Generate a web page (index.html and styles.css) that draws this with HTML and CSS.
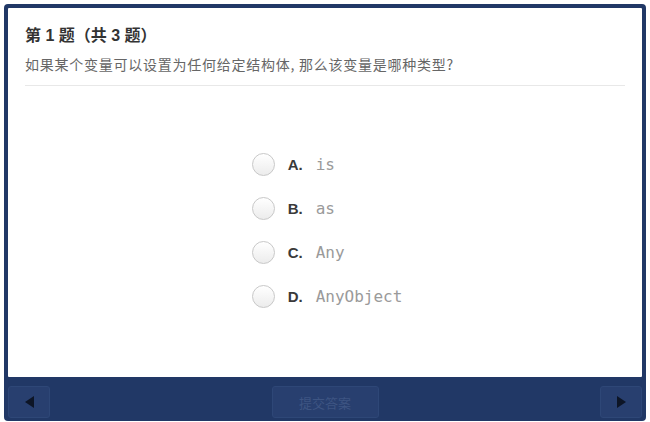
FILE: index.html
```html
<!DOCTYPE html>
<html lang="zh">
<head>
<meta charset="utf-8">
<link rel="stylesheet" href="styles.css">
</head>
<body>
<div class="frame">
  <div class="panel">
    <div class="head">
      <h1 class="title">第 1 题（共 3 题）</h1>
      <p class="question">如果某个变量可以设置为任何给定结构体, 那么该变量是哪种类型?</p>
    </div>
    <div class="body">
      <ul class="options">
        <li class="option"><span class="radio"></span><span class="key">A.</span><span class="val">is</span></li>
        <li class="option"><span class="radio"></span><span class="key">B.</span><span class="val">as</span></li>
        <li class="option"><span class="radio"></span><span class="key">C.</span><span class="val">Any</span></li>
        <li class="option"><span class="radio"></span><span class="key">D.</span><span class="val">AnyObject</span></li>
      </ul>
    </div>
  </div>
  <div class="footer">
    <button class="nav"><span class="tri tri-left"></span></button>
    <button class="submit">提交答案</button>
    <button class="nav"><span class="tri tri-right"></span></button>
  </div>
</div>
</body>
</html>
```

FILE: styles.css
```css
html, body {
  margin: 0;
  padding: 0;
  background: #ffffff;
}
body {
  font-family: "Noto Sans CJK SC", "Liberation Sans", sans-serif;
  width: 650px;
  height: 422px;
  overflow: hidden;
}
.frame {
  box-sizing: border-box;
  margin: 4px 4px 0 4px;
  height: 417px;
  background: #213866;
  border-radius: 4px;
  padding: 4px 4px 0 4px;
  display: flex;
  flex-direction: column;
}
.panel {
  flex: 1;
  background: #ffffff;
  border-radius: 1px;
  display: flex;
  flex-direction: column;
  padding: 0 17px;
}
.head {
  padding-top: 16px;
  padding-bottom: 11px;
  border-bottom: 1px solid #e8e8e8;
}
.title {
  margin: 0;
  font-family: "Liberation Sans", "Noto Sans CJK SC", sans-serif;
  font-size: 16px;
  font-weight: bold;
  line-height: 24px;
  color: #333333;
}
.question {
  margin: 6px 0 0 0;
  font-size: 14px;
  line-height: 20px;
  color: #666666;
  letter-spacing: 0.75px;
}
.body {
  flex: 1;
  display: flex;
  align-items: center;
  justify-content: center;
}
.options {
  list-style: none;
  margin: 0 0 3px 4px;
  padding: 0;
  display: flex;
  flex-direction: column;
  gap: 20px;
}
.option {
  display: flex;
  align-items: center;
  height: 24px;
}
.radio {
  box-sizing: border-box;
  width: 23px;
  height: 23px;
  border-radius: 50%;
  border: 1px solid #c8c8c8;
  background: linear-gradient(#ffffff, #ececec);
  margin-right: 13px;
}
.key {
  font-family: "Liberation Sans", sans-serif;
  font-weight: bold;
  font-size: 15px;
  color: #3a3a3a;
  width: 28px;
}
.val {
  font-family: "DejaVu Sans Mono", "Liberation Mono", monospace;
  font-size: 16px;
  color: #9a9a9a;
}
.footer {
  height: 44px;
  display: flex;
  justify-content: space-between;
  align-items: flex-start;
  padding-top: 9px;
  box-sizing: border-box;
}
button {
  font-family: inherit;
  border: 1px solid #2e4777;
  background: #283f6f;
  border-radius: 3px;
  padding: 0;
  height: 32px;
  display: flex;
  align-items: center;
  justify-content: center;
}
.nav {
  width: 42px;
}
.submit {
  width: 107px;
  font-size: 13px;
  color: #3e5583;
}
.tri {
  width: 0;
  height: 0;
  border-top: 6px solid transparent;
  border-bottom: 6px solid transparent;
}
.tri-left {
  border-right: 9px solid #0d1526;
}
.tri-right {
  border-left: 9px solid #0d1526;
}
```
